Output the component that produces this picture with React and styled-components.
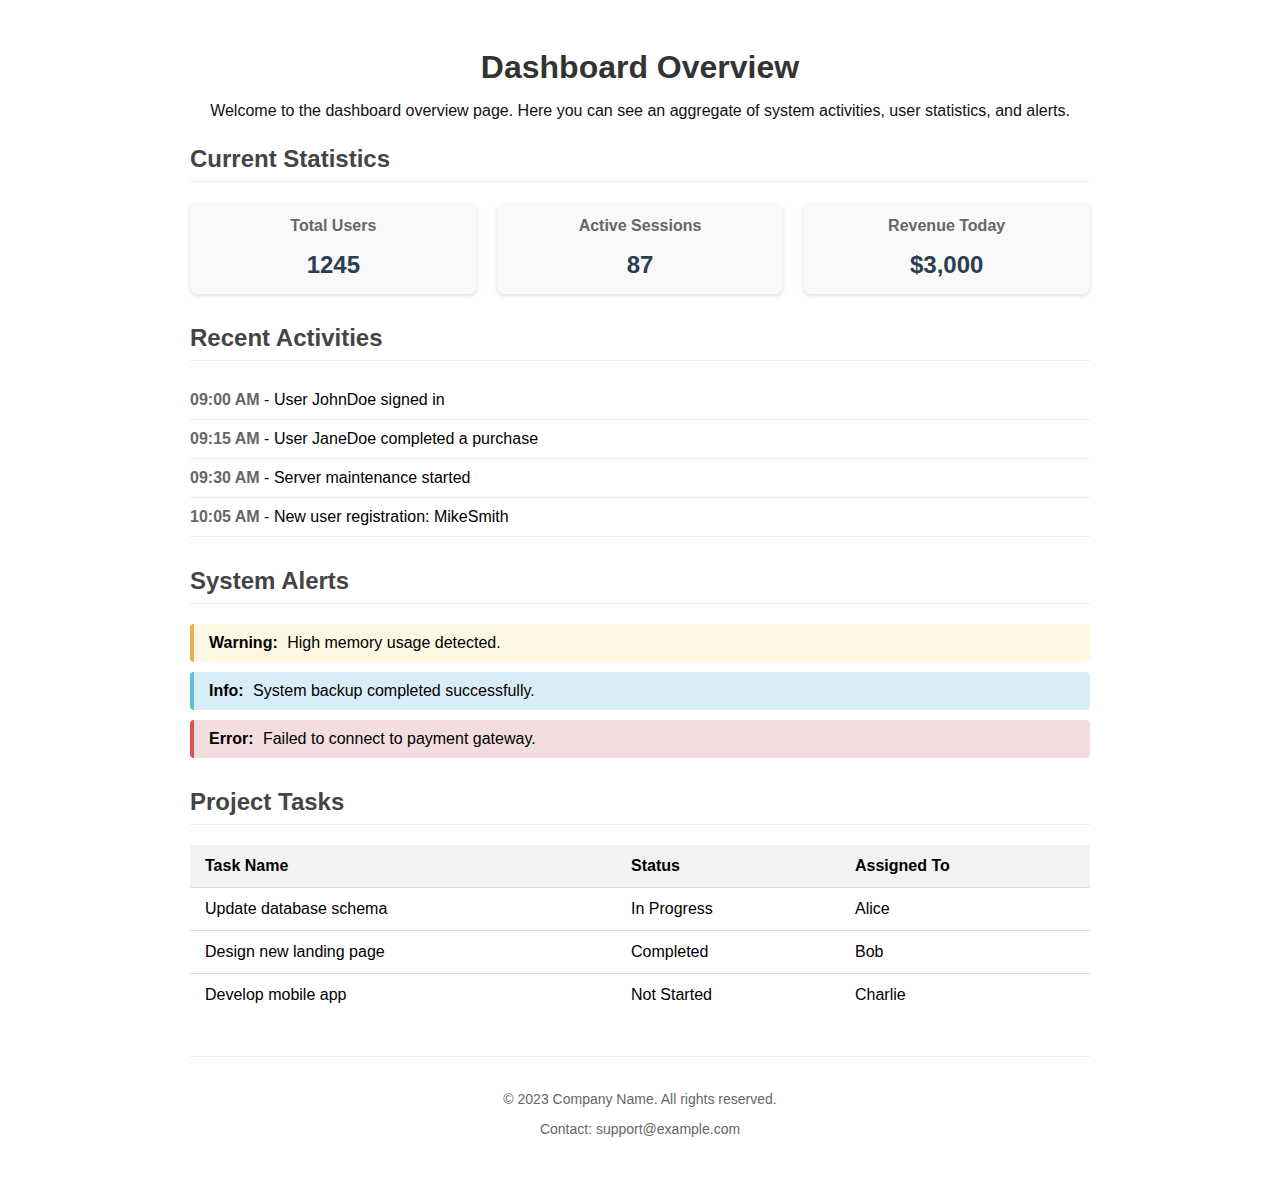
import styled, { createGlobalStyle } from 'styled-components';

const GlobalStyle = createGlobalStyle`
  html, body {
    margin: 0;
    padding: 0;
    background: #fff;
  }
  body {
    font-family: "Liberation Sans", Arial, sans-serif;
    color: #000;
  }
`;

const stats = [
  { label: 'Total Users', value: '1245' },
  { label: 'Active Sessions', value: '87' },
  { label: 'Revenue Today', value: '$3,000' },
];

const activities = [
  { time: '09:00 AM', text: 'User JohnDoe signed in' },
  { time: '09:15 AM', text: 'User JaneDoe completed a purchase' },
  { time: '09:30 AM', text: 'Server maintenance started' },
  { time: '10:05 AM', text: 'New user registration: MikeSmith' },
];

const alerts = [
  { kind: 'warning', label: 'Warning:', text: 'High memory usage detected.' },
  { kind: 'info', label: 'Info:', text: 'System backup completed successfully.' },
  { kind: 'error', label: 'Error:', text: 'Failed to connect to payment gateway.' },
];

const tasks = [
  { name: 'Update database schema', status: 'In Progress', who: 'Alice' },
  { name: 'Design new landing page', status: 'Completed', who: 'Bob' },
  { name: 'Develop mobile app', status: 'Not Started', who: 'Charlie' },
];

const alertColors = {
  warning: { bg: '#fdf7e4', bar: '#f0ad4e' },
  info: { bg: '#d9edf7', bar: '#5bc0de' },
  error: { bg: '#f2dede', bar: '#d9534f' },
};

function App() {
  return (
    <>
      <GlobalStyle />
      <Page>
        <Title>Dashboard Overview</Title>
        <Intro>
          Welcome to the dashboard overview page. Here you can see an aggregate of system
          activities, user statistics, and alerts.
        </Intro>

        <Section>
          <SectionTitle>Current Statistics</SectionTitle>
          <StatGrid>
            {stats.map(s => (
              <StatCard key={s.label}>
                <StatLabel>{s.label}</StatLabel>
                <StatValue>{s.value}</StatValue>
              </StatCard>
            ))}
          </StatGrid>
        </Section>

        <Section>
          <SectionTitle>Recent Activities</SectionTitle>
          <ActivityList>
            {activities.map(a => (
              <ActivityItem key={a.time}>
                <Time>{a.time}</Time> - {a.text}
              </ActivityItem>
            ))}
          </ActivityList>
        </Section>

        <Section>
          <SectionTitle>System Alerts</SectionTitle>
          <AlertStack>
            {alerts.map(a => (
              <Alert key={a.kind} $kind={a.kind}>
                <AlertLabel>{a.label}</AlertLabel> {a.text}
              </Alert>
            ))}
          </AlertStack>
        </Section>

        <Section>
          <SectionTitle>Project Tasks</SectionTitle>
          <Table>
            <thead>
              <tr>
                <Th $w="396px">Task Name</Th>
                <Th $w="194px">Status</Th>
                <Th>Assigned To</Th>
              </tr>
            </thead>
            <tbody>
              {tasks.map(t => (
                <Row key={t.name}>
                  <Td>{t.name}</Td>
                  <Td>{t.status}</Td>
                  <Td>{t.who}</Td>
                </Row>
              ))}
            </tbody>
          </Table>
        </Section>

        <Footer>
          <FooterText>© 2023 Company Name. All rights reserved.</FooterText>
          <FooterText>Contact: support@example.com</FooterText>
        </Footer>
      </Page>
    </>
  );
}

export default App;

const Page = styled.div`
  width: 900px;
  margin: 0 auto;
  padding: 49px 0 42px;
`;

const Title = styled.h1`
  margin: 0;
  font-size: 32px;
  line-height: 37px;
  font-weight: 700;
  color: #333;
  text-align: center;
`;

const Intro = styled.p`
  margin: 16px 0 25px;
  font-size: 16px;
  line-height: 18px;
  text-align: center;
  color: #111;
`;

const Section = styled.section`
  margin-bottom: 30px;
`;

const SectionTitle = styled.h2`
  margin: 0 0 20px;
  padding-bottom: 8px;
  font-size: 24px;
  line-height: 28px;
  font-weight: 700;
  color: #444;
  border-bottom: 1px solid #eee;
`;

const StatGrid = styled.div`
  display: grid;
  grid-template-columns: repeat(3, 1fr);
  gap: 20px;
`;

const StatCard = styled.div`
  display: flex;
  flex-direction: column;
  align-items: center;
  gap: 16px;
  padding: 15px 15px;
  background: #f9f9f9;
  border-radius: 8px;
  box-shadow: 0 2px 4px rgba(0, 0, 0, 0.12);
`;

const StatLabel = styled.div`
  font-size: 16px;
  line-height: 18px;
  font-weight: 700;
  color: #666;
`;

const StatValue = styled.div`
  font-size: 24px;
  line-height: 28px;
  font-weight: 700;
  color: #2c3e50;
`;

const ActivityList = styled.ul`
  list-style: none;
  margin: 0;
  padding: 0;
`;

const ActivityItem = styled.li`
  padding: 10px 0;
  font-size: 16px;
  line-height: 18px;
  border-bottom: 1px solid #eee;
`;

const Time = styled.span`
  font-weight: 700;
  color: #666;
`;

const AlertStack = styled.div`
  display: flex;
  flex-direction: column;
  gap: 10px;
`;

const Alert = styled.div`
  padding: 10px 15px;
  font-size: 16px;
  line-height: 18px;
  border-radius: 4px;
  border-left: 4px solid ${p => alertColors[p.$kind].bar};
  background: ${p => alertColors[p.$kind].bg};
`;

const AlertLabel = styled.strong`
  margin-right: 5px;
`;

const Table = styled.table`
  width: 100%;
  border-collapse: collapse;
  font-size: 16px;
  line-height: 18px;
`;

const Th = styled.th`
  width: ${p => p.$w || 'auto'};
  padding: 12px 15px;
  text-align: left;
  font-weight: 700;
  background: #f2f2f2;
  border-bottom: 1px solid #ddd;
`;

const Row = styled.tr`
  &:not(:last-child) td {
    border-bottom: 1px solid #ddd;
  }
`;

const Td = styled.td`
  padding: 12px 15px;
  text-align: left;
`;

const Footer = styled.footer`
  margin-top: 40px;
  padding-top: 34px;
  border-top: 1px solid #eee;
  display: flex;
  flex-direction: column;
  align-items: center;
  gap: 14px;
`;

const FooterText = styled.p`
  margin: 0;
  font-size: 14px;
  line-height: 16px;
  color: #666;
`;
